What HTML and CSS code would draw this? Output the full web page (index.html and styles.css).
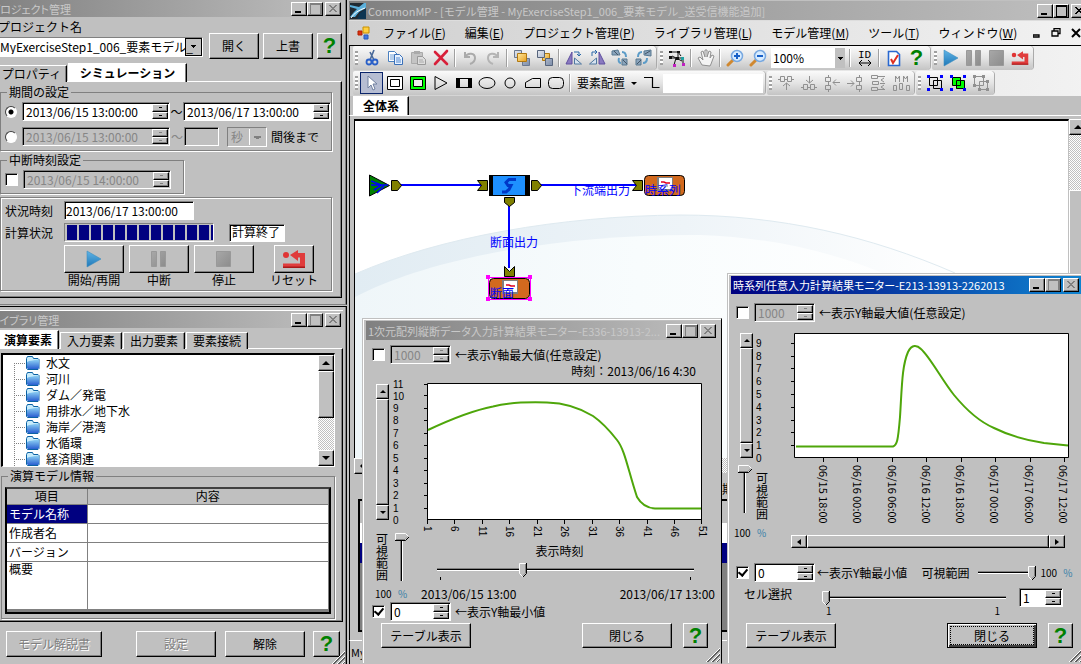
FILE: index.html
```html
<!DOCTYPE html>
<html lang="ja">
<head>
<meta charset="utf-8">
<title>CommonMP</title>
<link rel="stylesheet" href="styles.css">
</head>
<body>
<svg class="defs" aria-hidden="true">
  <defs>
    <linearGradient id="gBlue" x1="0" y1="0" x2="0" y2="1"><stop offset="0" stop-color="#5fb4e6"/><stop offset="1" stop-color="#1f78b8"/></linearGradient>
    <linearGradient id="gFolder" x1="0" y1="0" x2="0" y2="1"><stop offset="0" stop-color="#8fd3f5"/><stop offset="1" stop-color="#2a5fd0"/></linearGradient>
    <linearGradient id="gGray" x1="0" y1="0" x2="1" y2="1"><stop offset="0" stop-color="#a8a8a8"/><stop offset="1" stop-color="#8c8c8c"/></linearGradient>
    <linearGradient id="gGold" x1="0" y1="0" x2="1" y2="1"><stop offset="0" stop-color="#ffe9a0"/><stop offset="1" stop-color="#e8a020"/></linearGradient>
    <linearGradient id="gSteel" x1="0" y1="0" x2="1" y2="1"><stop offset="0" stop-color="#e4e8f0"/><stop offset="1" stop-color="#7c8ca8"/></linearGradient>
    <linearGradient id="gArc" x1="0" y1="0" x2="1" y2="0"><stop offset="0" stop-color="#e1ecf3"/><stop offset="0.55" stop-color="#eef4f8"/><stop offset="1" stop-color="#fff"/></linearGradient>
    <linearGradient id="gArc2" x1="0" y1="0" x2="1" y2="0"><stop offset="0" stop-color="#eff6f9"/><stop offset="0.5" stop-color="#f8fcfd"/><stop offset="1" stop-color="#fff"/></linearGradient>
    <symbol id="close" viewBox="0 0 10 10"><path d="M1 1l7 7M2 1l7 7M8 1l-7 7M9 1l-7 7" stroke="currentColor"/></symbol>
    <symbol id="folder" viewBox="0 0 16 16"><path d="M1.500 3.500l1-2h5l1 2h4.500l1 1v9l-1 1h-10.500l-1-1z" fill="#c8ecfb" stroke="#0b62a4"/><path d="M2 7l2-1 9-1.500 1 1v7l-1 1.500h-10l-1-1z" fill="url(#gFolder)"/></symbol>
    <symbol id="play" viewBox="0 0 18 18"><path d="M2 1v16l14-8z" fill="url(#gBlue)" stroke="#3c8dc0" stroke-width=".6"/></symbol>
    <symbol id="pause" viewBox="0 0 18 18"><path d="M1.500 1.500h5v15h-5zM10.500 1.500h5v15h-5z" fill="url(#gGray)" stroke="#999"/></symbol>
    <symbol id="stop" viewBox="0 0 18 18"><path d="M1.500 1.500h14v15h-14z" fill="url(#gGray)" stroke="#999"/></symbol>
    <symbol id="reset" viewBox="0 0 24 20"><circle cx="4" cy="6" r="3" fill="#e03434"/><path d="M8 6l8-5v3h7v14.500h-22v-4h17v-6h-2v3.500z" fill="#e03c3c"/><path d="M1 17.500h22v1.500h-22z" fill="#a81818"/></symbol>
    <symbol id="grip" viewBox="0 0 14 14"><path d="M0 14L14 0M5 14l9-9M10 14l4-4" stroke="#fff"/><path d="M1 14L14 1M2 14L14 2M6 14l8-8M7 14l7-7M11 14l3-3" stroke="#606060"/></symbol>
    <symbol id="mon" viewBox="0 0 16 14"><path d="M0 0h16v14h-16z" fill="#808080"/><path d="M2 1h13v11h-13z" fill="#fff"/><path d="M4 5h3l2 1h4" stroke="#e00020" stroke-width="1.500" fill="none"/><path d="M5 9h6" stroke="#888"/></symbol>
  </defs>
</svg>
<main class="desktop">

<section class="window main">
  <header class="title">
    <svg class="logo" viewBox="0 0 16 16"><path d="M0 0h16v16h-16z" fill="#202a33"/><path d="M0 2l9 2 5-4h2v5l-7 4-4 5h-5l4-5 3-3-7-2z" fill="#5bb0dc"/><path d="M16 6l-6 4-3 6h9z" fill="#0d3552"/><path d="M1 15c3-5 8-8 14-10" stroke="#fff" fill="none"/></svg>
    <h1>CommonMP - [モデル管理 - MyExerciseStep1_006_要素モデル_送受信機能追加]</h1>
    <div class="caps"><button class="cap min" aria-label="最小化"></button><button class="cap max" aria-label="最大化"></button><button class="cap cls" aria-label="閉じる"><svg><use href="#close"/></svg></button></div>
  </header>
  <nav class="menu">
    <svg class="mdi" viewBox="0 0 14 14"><path d="M1 5h4v4h-4z" fill="#e03010" stroke="#b02000"/><path d="M6 1h6v6h-6z" fill="#ffd040" stroke="#c89000"/><path d="M7 9h4v4h-4z" fill="#4078e0" stroke="#2858b8"/></svg>
    <button>ファイル(<u>F</u>)</button><button>編集(<u>E</u>)</button><button>プロジェクト管理(<u>P</u>)</button><button>ライブラリ管理(<u>L</u>)</button><button>モデル管理(<u>M</u>)</button><button>ツール(<u>T</u>)</button><button>ウィンドウ(<u>W</u>)</button>
    <svg class="mdibtn" viewBox="0 0 48 10"><path d="M0 7h6v2h-6zM19 3h6v5h-6zM19 3h6v1.500M21 3v-2.500h6v5h-2" fill="none" stroke="#000" stroke-width="1.300"/><path d="M39 1l8 8M47 1l-8 8" stroke="#000" stroke-width="2"/></svg>
  </nav>
  <div class="bars">
    <div class="barrow">
      <div class="strip"><i class="grip"></i>
        <button class="tb" aria-label="切り取り"><svg viewBox="0 0 18 18"><path d="M11 1L7 11M7 3l4 8" stroke="#4a6a9a" stroke-width="1.600"/><circle cx="6" cy="13" r="2.500" fill="none" stroke="#2a60c8" stroke-width="1.800"/><circle cx="12" cy="13" r="2.500" fill="none" stroke="#2a60c8" stroke-width="1.800"/></svg></button>
        <button class="tb" aria-label="コピー"><svg viewBox="0 0 18 18"><path d="M2.500 2.500h6l3 3v7h-9z" fill="#fff" stroke="#4a80c0"/><path d="M4 6h4M4 8h4M4 10h4" stroke="#70a0d8"/><path d="M8.500 5.500h5l3 3v7h-8z" fill="#e8f2ff" stroke="#3a70b8"/><path d="M10 9h4M10 11h5M10 13h5" stroke="#5088d0"/></svg></button>
        <button class="tb" aria-label="貼り付け"><svg viewBox="0 0 18 18"><path d="M2.500 3.500h11v11h-11z" fill="#c4c4c4" stroke="#aaa"/><path d="M5 2h6v3h-6z" fill="#aaa"/><path d="M8.500 7.500h5l3 3v5h-8z" fill="#ddd" stroke="#999"/><path d="M10 11h4M10 13h5" stroke="#aaa"/></svg></button>
        <button class="tb" aria-label="削除"><svg viewBox="0 0 18 18"><path d="M3 3l12 12M15 2L3 15" stroke="#d8203a" stroke-width="2.600" stroke-linecap="round"/></svg></button>
        <i class="sep"></i>
        <button class="tb" aria-label="元に戻す"><svg viewBox="0 0 18 18"><path d="M4 3v5h5M4 8c3-5 10-4 10 1 0 3-2 5-5 6" fill="none" stroke="#aaa" stroke-width="2"/></svg></button>
        <button class="tb" aria-label="やり直し"><svg viewBox="0 0 18 18"><path d="M14 3v5h-5M14 8c-3-5-10-4-10 1 0 3 2 5 5 6" fill="none" stroke="#b4b4b4" stroke-width="2"/></svg></button>
        <i class="sep"></i>
        <button class="tb" aria-label="前面へ"><svg viewBox="0 0 18 18"><path d="M1.500 1.500h7v7h-7zM9.500 9.500h7v7h-7z" fill="url(#gSteel)" stroke="#6a7890"/><path d="M4.500 4.500h9v8h-9z" fill="url(#gGold)" stroke="#b07810"/></svg></button>
        <button class="tb" aria-label="背面へ"><svg viewBox="0 0 18 18"><path d="M6.500 4.500h7v7h-7z" fill="url(#gGold)" stroke="#b07810"/><path d="M1.500 1.500h7v7h-7zM9.500 9.500h7v7h-7z" fill="url(#gSteel)" stroke="#56647c"/></svg></button>
        <i class="sep"></i>
        <button class="tb" aria-label="左回転"><svg viewBox="0 0 18 18"><path d="M7 3v12h-6z" fill="#8a7ac0" stroke="#6050a0"/><path d="M9.500 9v6h7z" fill="#d8e4f0" stroke="#5078a0"/><path d="M9 3h5v4M12 5l2 2 2-2" stroke="#2a68a8" fill="none"/></svg></button>
        <button class="tb" aria-label="右回転"><svg viewBox="0 0 18 18"><path d="M11 3v12h6z" fill="#8a7ac0" stroke="#6050a0"/><path d="M8.500 9v6h-7z" fill="#d8e4f0" stroke="#5078a0"/><path d="M4 7V3h5M7 1l2 2-2 2" stroke="#2a68a8" fill="none"/></svg></button>
        <button class="tb" aria-label="下へ"><svg viewBox="0 0 18 18"><path d="M1 2l6-1 2 5-8 0zM11 10h5v6h-5z" fill="#8aa4bc" stroke="#587890"/><path d="M3 2l4 4M12 11l4 4" stroke="#456"/><path d="M11 3c3 0 4 2 4 5M8 9c-1 3 0 5 2 5" stroke="#5c9cc8" stroke-width="2" fill="none"/></svg></button>
        <button class="tb" aria-label="上へ"><svg viewBox="0 0 18 18"><path d="M10 2l7-1 0 6-7-1zM2 10h5v6h-5z" fill="#8aa4bc" stroke="#587890"/><path d="M11 5l5-3M3 15l4-4" stroke="#456"/><path d="M8 3c-3 0-4 2-4 5M13 9c0 3-1 5-4 5" stroke="#5c9cc8" stroke-width="2" fill="none"/></svg></button>
      </div>
      <div class="strip"><i class="grip"></i>
        <button class="tb" aria-label="接続"><svg viewBox="0 0 18 18"><path d="M4 3h6l3 4M3 9h12M10 4v5M15 8v7M8 9l-2 7M4 7l10 5" stroke="#111" fill="none"/><path d="M1 7h3v3h-3zM8 8h3v3h-3zM1 2h3v2h-3zM9 2h3v2h-3z" fill="#111"/><path d="M13 8h3v3h-3z" fill="#20a0a0"/><path d="M5 15h3v3h-3zM14 14h3v3h-3z" fill="#c020c0"/></svg></button>
        <i class="sep"></i>
        <button class="tb" aria-label="手のひら"><svg viewBox="0 0 18 18"><path d="M5 16L1 9l2-1 3 3-2-8 2-1 2 6V1h2v7l2-6 2 1-1 6 2-3 2 1-3 8-1 2z" fill="#f4f4f4" stroke="#909090"/></svg></button>
        <i class="sep"></i>
        <button class="tb" aria-label="拡大"><svg viewBox="0 0 18 18"><path d="M7 11l-5 5" stroke="#d08830" stroke-width="3" stroke-linecap="round"/><circle cx="11" cy="7" r="5.500" fill="#d8ecff" stroke="#78a8e0" stroke-width="1.500"/><path d="M8 7h6M11 4v6" stroke="#1860c8" stroke-width="2"/></svg></button>
        <button class="tb" aria-label="縮小"><svg viewBox="0 0 18 18"><path d="M7 11l-5 5" stroke="#d08830" stroke-width="3" stroke-linecap="round"/><circle cx="11" cy="7" r="5.500" fill="#d8ecff" stroke="#78a8e0" stroke-width="1.500"/><path d="M8 7h6" stroke="#1860c8" stroke-width="2"/></svg></button>
        <select class="zoom" aria-label="倍率"><option>100%</option></select>
        <i class="sep"></i>
        <button class="tb idb" aria-label="ID幅">ID<svg viewBox="0 0 14 6"><path d="M1 3h12M4 0L1 3l3 3M10 0l3 3-3 3" stroke="#000" fill="none"/></svg></button>
        <i class="sep"></i>
        <button class="tb" aria-label="チェック"><svg viewBox="0 0 18 18"><path d="M3.500 2.500h8l3 3v11h-11z" fill="#fff" stroke="#2868d0" stroke-width="1.600"/><path d="M6 10l2 4 5-8" stroke="#e03020" stroke-width="2" fill="none"/></svg></button>
        <button class="tb q" aria-label="ヘルプ">?</button>
      </div>
      <div class="strip"><i class="grip"></i>
        <button class="tb" aria-label="開始"><svg><use href="#play"/></svg></button>
        <button class="tb" aria-label="中断"><svg><use href="#pause"/></svg></button>
        <button class="tb" aria-label="停止"><svg><use href="#stop"/></svg></button>
        <button class="tb" aria-label="リセット"><svg><use href="#reset"/></svg></button>
      </div>
    </div>
    <div class="barrow">
      <div class="strip"><i class="grip"></i>
        <button class="tb sel" aria-label="選択"><svg viewBox="0 0 18 18"><path d="M5 2v12l3-3 2 5 2-1-2-5h4z" fill="#fff" stroke="#7080a0"/></svg></button>
        <button class="tb" aria-label="二重枠"><svg viewBox="0 0 18 18"><path d="M1.500 2.500h15v13h-15zM4.500 5.500h9v7h-9z" fill="#fff" stroke="#000"/></svg></button>
        <button class="tb" aria-label="緑枠"><svg viewBox="0 0 18 18"><path d="M1.500 2.500h15v13h-15z" fill="#0f0" stroke="#000"/><path d="M4.500 5.500h9v7h-9z" fill="#eee" stroke="#000"/></svg></button>
        <button class="tb" aria-label="三角"><svg viewBox="0 0 18 18"><path d="M3 2.500v13l12-6.500z" fill="none" stroke="#000"/></svg></button>
        <button class="tb" aria-label="太枠"><svg viewBox="0 0 18 18"><path d="M1 4h16v10h-16zM5 5v8h8v-8z" fill-rule="evenodd"/></svg></button>
        <button class="tb" aria-label="楕円"><svg viewBox="0 0 18 18"><ellipse cx="9" cy="9" rx="8" ry="5.500" fill="none" stroke="#000"/></svg></button>
        <button class="tb" aria-label="円"><svg viewBox="0 0 18 18"><circle cx="9" cy="9" r="5" fill="none" stroke="#000"/></svg></button>
        <button class="tb" aria-label="台形"><svg viewBox="0 0 18 18"><path d="M1.500 13.500v-5l7-4h8v9z" fill="none" stroke="#000"/></svg></button>
        <button class="tb" aria-label="角丸"><svg viewBox="0 0 18 18"><rect x="1.500" y="3.500" width="15" height="11" rx="4" fill="none" stroke="#000"/></svg></button>
        <i class="sep"></i>
        <button class="place">要素配置<i class="down"></i></button>
        <button class="tb" aria-label="線"><svg viewBox="0 0 18 18"><path d="M1 3.500h8.500v10h7" fill="none" stroke="#000" stroke-width="1.200"/></svg></button>
        <input class="blank" type="text" aria-label="線種">
      </div>
      <div class="strip"><i class="grip"></i>
        <button class="tb dim" aria-label="整列1"><svg viewBox="0 0 18 18"><path d="M3.500 2.500h4v5h-4zM10.500 2.500h4v5h-4zM7 5.500h4M1 5.500h2M15 5.500h2M9.500 16V9M6 12l3.500-3 3.500 3"/></svg></button>
        <button class="tb dim" aria-label="整列2"><svg viewBox="0 0 18 18"><path d="M3.500 10.500h4v5h-4zM10.500 10.500h4v5h-4zM7 13.500h4M1 13.500h2M15 13.500h2M9.500 2v7M6 6l3.500 3 3.500-3"/></svg></button>
        <button class="tb dim" aria-label="整列3"><svg viewBox="0 0 18 18"><path d="M2.500 3.500h5v4h-5zM2.500 11.500h5v4h-5zM5.500 1v2M5.500 8v3M5.500 16v2M17 8.500H10M13 5.500l-3 3 3 3"/></svg></button>
        <button class="tb dim" aria-label="整列4"><svg viewBox="0 0 18 18"><path d="M10.500 3.500h5v4h-5zM10.500 11.500h5v4h-5zM13.500 1v2M13.500 8v3M13.500 16v2M1 9.500h7M5 6.500l3 3-3 3"/></svg></button>
        <button class="tb dim" aria-label="整列5"><svg viewBox="0 0 18 18"><path d="M2.500 1.500h6v3h-6zM3.500 7.500h6v3h-6zM2.500 13.500h6v3h-6zM9 2.500h7M11 9.500h5M9 15.500h7M15 4l-3 2 3 2M15 11l-3 2 3 2"/></svg></button>
        <button class="tb dim" aria-label="整列6"><svg viewBox="0 0 18 18"><path d="M1.500 11.500h3v5h-3zM7.500 9.500h3v6h-3zM14.500 11.500h3v5h-3zM3.500 8V2l2 3 2-3v6M11.500 8V2l2 3 2-3v6"/></svg></button>
      </div>
      <div class="strip"><i class="grip"></i>
        <button class="tb" aria-label="グループ化"><svg viewBox="0 0 18 18"><path d="M3.500 3.500h8v8h-8zM7.500 6.500h8v8h-8z" fill="none" stroke="#000"/><path d="M1 1h3v3h-3zM14 1h3v3h-3zM1 14h3v3h-3zM14 14h3v3h-3z" fill="#00f"/></svg></button>
        <button class="tb" aria-label="グループ編集"><svg viewBox="0 0 18 18"><path d="M3 3h9v4h4v8h-9v-4h-4z" fill="#0f0"/><path d="M3.500 3.500h8v8h-8zM7.500 6.500h8v8h-8z" fill="none" stroke="#000"/><path d="M1 1h3v3h-3zM14 1h3v3h-3zM1 14h3v3h-3zM14 14h3v3h-3z" fill="#00f"/></svg></button>
        <button class="tb dim" aria-label="グループ解除"><svg viewBox="0 0 18 18"><path d="M2.500 2.500h9v9h-9zM7.500 7.500h8v8h-8z"/><path d="M1 1h3v3h-3zM10 1h3v3h-3zM1 10h3v3h-3zM14 6h3v3h-3zM14 14h3v3h-3zM6 14h3v3h-3z" fill="#909090" stroke="none"/></svg></button>
      </div>
    </div>
  </div>
  <div class="tabs mtabs"><button class="tab on">全体系</button></div>
  <div class="work">
    <div class="canvas">
      <svg class="model" width="712" height="337" viewBox="355 121 712 337" preserveAspectRatio="xMinYMin">
        <path d="M355 274C440 237 560 216 680 215C780 215 870 236 955 273V458H355z" fill="url(#gArc)"/>
        <path d="M355 297C430 258 560 234 700 235C790 238 860 260 920 290V458H355z" fill="url(#gArc2)"/>
        <path d="M355 274C440 237 560 216 680 215C780 215 870 236 955 273" fill="none" stroke="#dfeaf0"/>
        <g stroke="#00f" stroke-width="2"><path d="M400 185H482M540 185H636M509 206V268"/></g>
        <path d="M369.500 175v21l20-10.500z" fill="#008000" stroke="#000"/><path d="M371 181l10 4h7M374 190l8-5M371 185h12M377 193l7-7" stroke="#00f" stroke-width="1.500" fill="none"/>
        <g fill="#808000" stroke="#000"><path d="M391.500 180.500h6l4 5-4 5h-6z"/><path d="M477.500 180.500h10v10h-10l4-5z"/><path d="M531.500 180.500h6l4 5-4 5h-6z"/><path d="M632.500 180.500h10v10h-10l4-5z"/><path d="M504.500 197.500h10v5l-5 4-5-4z"/><path d="M504.500 266.500l5 5 5-5v10h-10z"/></g>
        <path d="M489 175h41v21h-41z"/><path d="M493 176h32v19h-32z" fill="#1e90ff"/><path d="M516 179.500h-7l-3 3 2 3h3l-2 4-3 2.500h-4" stroke="#0038c8" stroke-width="3" fill="none"/>
        <rect x="644.500" y="175.500" width="40" height="20" rx="4" fill="#d2691e" stroke="#000"/><use href="#mon" x="657" y="177" width="16" height="14"/>
        <rect x="489.500" y="278.500" width="40" height="20" rx="4" fill="#d2691e" stroke="#000"/><use href="#mon" x="502" y="280" width="16" height="14"/>
        <path d="M488.500 277.500h42v22h-42z" fill="none" stroke="#f0f"/><path d="M486 275h4v4h-4zM528 275h4v4h-4zM486 297h4v4h-4zM528 297h4v4h-4z" fill="#f0f"/>
        <g class="nodetext"><text x="570" y="195">下流端出力</text><text x="645" y="195">時系列</text><text x="490" y="247">断面出力</text><text x="490" y="298">断面</text></g>
      </svg>
      <div class="scroll v"><button class="up" aria-label="上"></button><i class="track"></i><i class="thumb"></i></div>
    </div>
    <div class="scroll h"><button class="left" aria-label="左"></button><i class="track"></i></div>
    <div class="lower"><span>期間</span><div class="grid"><i class="hd"></i><i class="w"></i><i class="n"></i></div></div>
  </div>
  <footer class="status">MyExerciseStep1_006</footer>
</section>

<section class="window project">
  <header class="title"><h2>プロジェクト管理</h2><div class="caps"><button class="cap min" aria-label="最小化"></button><button class="cap max off" aria-label="最大化"></button><button class="cap cls off" aria-label="閉じる"><svg><use href="#close"/></svg></button></div></header>
  <div class="top">
    <div class="name"><label for="pj">プロジェクト名</label><select id="pj"><option>MyExerciseStep1_006_要素モデル_</option></select></div>
    <button class="btn b50">開く</button><button class="btn b50">上書</button><button class="btn q" aria-label="ヘルプ">?</button>
  </div>
  <div class="tabs"><button class="tab first">プロパティ</button><button class="tab on wide">シミュレーション</button></div>
  <div class="page">
    <fieldset><legend>期間の設定</legend>
      <div class="row"><input type="radio" name="p" checked aria-label="期間指定"><div class="spin dt"><input type="text" value="2013/06/15 13:00:00" aria-label="開始"><span><button></button><button></button></span></div><span class="til">～</span><div class="spin dt"><input type="text" value="2013/06/17 13:00:00" aria-label="終了"><span><button></button><button></button></span></div></div>
      <div class="row"><input type="radio" name="p" aria-label="間隔指定"><div class="spin dt off"><input type="text" value="2013/06/15 13:00:00" disabled aria-label="開始2"><span><button></button><button></button></span></div><span class="til dis">～</span><input class="sunk off amount" type="text" disabled aria-label="量"><select class="unit" disabled aria-label="単位"><option>秒</option></select><span>間後まで</span></div>
    </fieldset>
    <fieldset class="brk"><legend>中断時刻設定</legend>
      <div class="row"><input type="checkbox" aria-label="中断時刻"><div class="spin dt off"><input type="text" value="2013/06/15 14:00:00" disabled aria-label="中断"><span><button></button><button></button></span></div></div>
    </fieldset>
    <div class="box">
      <div class="row"><label for="st">状況時刻</label><input id="st" class="sunk sttime" type="text" value="2013/06/17 13:00:00"></div>
      <div class="row"><span class="lab">計算状況</span><div class="prog" role="progressbar" aria-label="計算状況"></div><output class="sunk">計算終了</output></div>
      <div class="acts">
        <div><button class="btn" id="a1"><svg><use href="#play"/></svg></button><label for="a1">開始/再開</label></div>
        <div><button class="btn" id="a2"><svg><use href="#pause"/></svg></button><label for="a2">中断</label></div>
        <div><button class="btn" id="a3"><svg><use href="#stop"/></svg></button><label for="a3">停止</label></div>
        <div class="rs"><button class="btn" id="a4"><svg class="big"><use href="#reset"/></svg></button><label for="a4">リセット</label></div>
      </div>
    </div>
  </div>
</section>

<section class="window library">
  <header class="title"><h2>ライブラリ管理</h2><div class="caps"><button class="cap min" aria-label="最小化"></button><button class="cap max off" aria-label="最大化"></button><button class="cap cls off" aria-label="閉じる"><svg><use href="#close"/></svg></button></div></header>
  <div class="tabs"><button class="tab on">演算要素</button><button class="tab">入力要素</button><button class="tab">出力要素</button><button class="tab">要素接続</button></div>
  <div class="page">
    <div class="tree">
      <ul><li><svg><use href="#folder"/></svg>水文</li><li><svg><use href="#folder"/></svg>河川</li><li><svg><use href="#folder"/></svg>ダム／発電</li><li><svg><use href="#folder"/></svg>用排水／地下水</li><li><svg><use href="#folder"/></svg>海岸／港湾</li><li><svg><use href="#folder"/></svg>水循環</li><li><svg><use href="#folder"/></svg>経済関連</li></ul>
      <div class="scroll v"><button class="up" aria-label="上"></button><i class="thumb"></i><i class="track"></i><button class="dn" aria-label="下"></button></div>
    </div>
    <fieldset><legend>演算モデル情報</legend>
      <div class="tbl"><table><thead><tr><th>項目</th><th>内容</th></tr></thead><tbody><tr><td class="cur">モデル名称</td><td></td></tr><tr><td>作成者名</td><td></td></tr><tr><td>バージョン</td><td></td></tr><tr class="tall"><td>概要</td><td></td></tr></tbody></table></div>
    </fieldset>
  </div>
  <div class="foot"><button class="btn" disabled>モデル解説書</button><button class="btn set" disabled>設定</button><button class="btn rel">解除</button><button class="btn q" aria-label="ヘルプ">?</button></div>
  <svg class="rgrip"><use href="#grip"/></svg>
</section>

<section class="window mon1">
  <header class="title"><h2>1次元配列縦断データ入力計算結果モニター-E336-13913-2...</h2><div class="caps"><button class="cap min" aria-label="最小化"></button><button class="cap max off" aria-label="最大化"></button><button class="cap cls off" aria-label="閉じる"><svg><use href="#close"/></svg></button></div></header>
  <div class="row yset"><input type="checkbox" id="m1x"><div class="spin num off"><input type="text" value="1000" disabled aria-label="最大値"><span><button></button><button></button></span></div><label for="m1x">←表示Y軸最大値(任意設定)</label></div>
  <div class="now">時刻：2013/06/16 4:30</div>
  <div class="chartrow">
    <div class="scroll v"><button class="up" aria-label="上"></button><i class="thumb"></i><button class="dn" aria-label="下"></button></div>
    <svg class="chart" width="322" height="152" viewBox="390 380 322 152">
      <path d="M427.500 383.500h274v136h-274z" fill="#fff" stroke="#000"/>
      <path d="M424 384.500h4M424 395.500h4M424 408.500h4M424 420.500h4M424 433.500h4M424 445.500h4M424 458.500h4M424 470.500h4M424 483.500h4M424 495.500h4M424 508.500h4M427.500 519v5M454.500 519v5M482.500 519v5M509.500 519v5M537.500 519v5M564.500 519v5M592.500 519v5M619.500 519v5M647.500 519v5M674.500 519v5M701.500 519v5" stroke="#000"/>
      <path d="M428 430C445 422 470 411 493 406.500C510 402 530 402 547 402.500C565 403 580 408 593 416C603 423 610 431 617 440C625 450 628 470 637 497C641 504 646 508 655 508.500H701" fill="none" stroke="#4ea60a" stroke-width="2"/>
      <g><text x="393" y="388">11</text><text x="393" y="400">10</text><text x="393" y="412">9</text><text x="393" y="424">8</text><text x="393" y="437">7</text><text x="393" y="449">6</text><text x="393" y="462">5</text><text x="393" y="474">4</text><text x="393" y="487">3</text><text x="393" y="499">2</text><text x="393" y="512">1</text><text x="393" y="524">0</text></g>
      <g><text transform="translate(424 526) rotate(90)">1</text><text transform="translate(451 526) rotate(90)">6</text><text transform="translate(479 526) rotate(90)">11</text><text transform="translate(506 526) rotate(90)">16</text><text transform="translate(534 526) rotate(90)">21</text><text transform="translate(561 526) rotate(90)">26</text><text transform="translate(589 526) rotate(90)">31</text><text transform="translate(616 526) rotate(90)">36</text><text transform="translate(644 526) rotate(90)">41</text><text transform="translate(671 526) rotate(90)">46</text><text transform="translate(699 526) rotate(90)">51</text></g>
    </svg>
  </div>
  <div class="timerow"><span class="vt">可視範囲</span><input class="vs" type="range" min="0" max="100" value="0" aria-label="可視範囲"><div class="time"><label for="ts">表示時刻</label><input id="ts" type="range" min="0" max="100" value="33"><div class="ticks"><i></i><i></i></div></div></div>
  <div class="dates"><span class="pct">100 <b>%</b></span><span>2013/06/15 13:00</span><span class="end">2013/06/17 13:00</span></div>
  <div class="row ymin"><input type="checkbox" id="m1n" checked><div class="spin num"><input type="text" value="0" aria-label="最小値"><span><button></button><button></button></span></div><label for="m1n">←表示Y軸最小値</label></div>
  <div class="btns"><button class="btn">テーブル表示</button><button class="btn shut">閉じる</button><button class="btn q" aria-label="ヘルプ">?</button></div>
  <svg class="rgrip"><use href="#grip"/></svg>
</section>

<section class="window mon2">
  <header class="title active"><h2>時系列任意入力計算結果モニター-E213-13913-2262013</h2><div class="caps"><button class="cap min" aria-label="最小化"></button><button class="cap max off" aria-label="最大化"></button><button class="cap cls off" aria-label="閉じる"><svg><use href="#close"/></svg></button></div></header>
  <div class="row yset"><input type="checkbox" id="m2x"><div class="spin num off"><input type="text" value="1000" disabled aria-label="最大値"><span><button></button><button></button></span></div><label for="m2x">←表示Y軸最大値(任意設定)</label></div>
  <div class="chartrow">
    <div class="scroll v"><button class="up" aria-label="上"></button><i class="thumb"></i><button class="dn" aria-label="下"></button></div>
    <svg class="chart" width="318" height="134" viewBox="755 328 318 134">
      <path d="M794.500 333.500h274v124h-274z" fill="#fff" stroke="#000"/>
      <path d="M791 343.500h4M791 356.500h4M791 368.500h4M791 381.500h4M791 394.500h4M791 407.500h4M791 420.500h4M791 432.500h4M791 445.500h4M823.500 458v4M857.500 458v4M892.500 458v4M926.500 458v4M961.500 458v4M995.500 458v4M1030.500 458v4M1064.500 458v4" stroke="#000"/>
      <path d="M796 446.500H893C897 445 898 441 900 417C902 385 902 366 908 352C912 344 917 345 921 349C930 357 942 380 954 395C968 412 980 422 994 428C1010 436 1025 440 1044 443L1068 445.500" fill="none" stroke="#4ea60a" stroke-width="2"/>
      <g><text x="756" y="347">9</text><text x="756" y="360">8</text><text x="756" y="372">7</text><text x="756" y="385">6</text><text x="756" y="398">5</text><text x="756" y="411">4</text><text x="756" y="424">3</text><text x="756" y="436">2</text><text x="756" y="449">1</text><text x="756" y="462">0</text></g>
    </svg>
  </div>
  <div class="axisrow"><input class="vs" type="range" min="0" max="100" value="0" aria-label="可視範囲"><span class="vt">可視範囲</span><div class="xl"><span>06/15 18:00</span><span>06/16 00:00</span><span>06/16 06:00</span><span>06/16 12:00</span><span>06/16 18:00</span><span>06/17 00:00</span><span>06/17 06:00</span><span>06/17 12:00</span></div></div>
  <div class="hrow"><span class="pct">100 <b>%</b></span><div class="scroll h"><button class="left" aria-label="左"></button><i class="thumb"></i><button class="right" aria-label="右"></button></div></div>
  <div class="row ymin"><input type="checkbox" id="m2n" checked><div class="spin num"><input type="text" value="0" aria-label="最小値"><span><button></button><button></button></span></div><label for="m2n">←表示Y軸最小値</label><label class="vis" for="vr">可視範囲</label><input id="vr" type="range" min="0" max="100" value="100"><span class="pct">100 <b>%</b></span></div>
  <div class="cell"><label for="cs">セル選択</label><div class="cs"><input id="cs" type="range" min="0" max="100" value="0"><div class="nums"><span>1</span><span>1</span></div></div><div class="spin one"><input type="text" value="1" aria-label="セル"><span><button></button><button></button></span></div></div>
  <div class="btns"><button class="btn">テーブル表示</button><button class="btn shut def">閉じる</button><button class="btn q" aria-label="ヘルプ">?</button></div>
  <svg class="rgrip"><use href="#grip"/></svg>
</section>
</main>
</body>
</html>
```

FILE: styles.css
```css
* { box-sizing: border-box; }
html, body { height: 100%; }
body {
  margin: 0;
  overflow: hidden;
  background: #c0c0c0;
  color: #000;
  font: 12px/14px "Noto Sans CJK JP", "Liberation Sans", sans-serif;
}
button, input, select, output { font: inherit; color: inherit; margin: 0; padding: 0; border-radius: 0; }
h1, h2, ul { margin: 0; padding: 0; font: inherit; list-style: none; }
i, b { font-style: normal; font-weight: normal; }
.defs { position: absolute; width: 0; height: 0; }
.desktop { position: relative; height: 100vh; overflow: hidden; }

/* windows */
.window { position: absolute; background: #c0c0c0; display: flex; flex-direction: column; }
.title {
  display: flex;
  align-items: center;
  flex: none;
  height: 19px;
  padding: 0 2px;
  background: linear-gradient(90deg, #808080, #c0c0c0);
  color: #c8c8c8;
  white-space: nowrap;
}
.title.active { background: linear-gradient(90deg, #000080, #1084d0); color: #fff; }
.title h1, .title h2 { flex: 1; min-width: 0; overflow: hidden; font-size: 11px; line-height: 16px; }
.title h2 { font-feature-settings: "palt"; }
.caps { display: flex; flex: none; }
.cap, .btn, .scroll button, .thumb, .spin button {
  background: #c0c0c0;
  border: 1px solid;
  border-color: #fff #000 #000 #fff;
  box-shadow: inset -1px -1px 0 #808080;
}
.cap { width: 16px; height: 14px; display: flex; align-items: center; justify-content: center; color: #000; }
.cap.cls { margin-left: 2px; }
.cap.off { color: #808080; }
.cap svg { width: 10px; height: 10px; flex: none; }
.min::before { content: ""; width: 6px; height: 2px; background: #000; margin: 6px 3px 0 0; }
.max::before { content: ""; width: 9px; height: 9px; border: 1px solid; border-top-width: 2px; }
.rgrip { position: absolute; right: 1px; bottom: 1px; width: 14px; height: 14px; }

/* controls */
.btn { height: 25px; width: 90px; display: flex; align-items: center; justify-content: center; white-space: nowrap; }
.btn:disabled { color: #808080; text-shadow: 1px 1px 0 #fff; }
.btn.q { width: 25px; }
.q { color: #008000; font: bold 22px/22px "Liberation Sans", sans-serif; }
.btn.def { border-color: #000; box-shadow: inset 1px 1px 0 #fff, inset -2px -2px 0 #404040; outline: 1px dotted #000; outline-offset: -4px; }
.btn svg { width: 18px; height: 18px; }
.btn svg.big { width: 26px; height: 20px; }
.row { display: flex; align-items: center; height: 19px; white-space: nowrap; }
.sunk, .spin, .prog {
  border: 1px solid;
  border-color: #808080 #fff #fff #808080;
  box-shadow: inset 1px 1px 0 #000;
  background: #fff;
  height: 19px;
}
.spin { display: flex; flex: none; padding: 1px; }
.spin input { flex: 1; min-width: 0; border: 0; background: none; padding-left: 2px; height: 15px; outline: 0; }
.spin > span { display: flex; flex-direction: column; width: 16px; }
.spin button { flex: 1; min-height: 0; background: #c0c0c0 linear-gradient(#000, #000) center / 3px 1px no-repeat; }
.off { background: #c0c0c0; }
.spin.off, .spin.off input, .til.dis { color: #868686; }
.off button { background: #c0c0c0 linear-gradient(#808080, #808080) center / 3px 1px no-repeat; }
.spin.dt { width: 148px; }
.spin.num { width: 61px; }
.spin.one { width: 44px; }
.til { width: 14px; text-align: center; }
input[type="radio"], input[type="checkbox"] { appearance: none; flex: none; width: 12px; height: 12px; background: #fff; border: 1px solid; border-color: #808080 #fff #fff #808080; }
input[type="radio"] { border-radius: 50%; border-color: #404040 #fff #fff #404040; }
input[type="radio"]:checked { background: radial-gradient(#000 2px, #fff 3px); }
input[type="checkbox"] { width: 13px; height: 13px; box-shadow: inset 1px 1px 0 #000; }
input[type="checkbox"]:checked { display: grid; place-items: center; }
input[type="checkbox"]:checked::before { content: ""; width: 4px; height: 7px; border: solid #000; border-width: 0 2px 2px 0; transform: rotate(40deg); margin-bottom: 2px; }
select { appearance: none; white-space: nowrap; }
fieldset { margin: 0; min-width: 0; padding: 3px 0 4px; border: 1px solid #808080; }
legend { margin-left: 6px; padding: 0 2px; line-height: 14px; }

/* tabs */
.tabs { display: flex; align-items: flex-end; flex: none; position: relative; }
.tab { height: 17px; background: #c0c0c0; border: 1px solid; border-color: #fff #000 transparent #fff; border-bottom: 0; white-space: nowrap; margin-right: 1px; width: 62px; box-shadow: inset -1px 0 0 #808080; }
.tab.on { height: 19px; background: #fff; font-weight: bold; }
.page { border: 1px solid; border-color: #fff #000 #000 #fff; box-shadow: inset -1px -1px 0 #808080; flex: none; }

/* scrollbars */
.scroll { display: flex; flex: none; }
.scroll.v { flex-direction: column; width: 16px; }
.scroll button { flex: none; width: 16px; height: 16px; display: flex; align-items: center; justify-content: center; }
.scroll button::before { content: ""; border: 4px solid transparent; }
.scroll .up::before { border-bottom-color: #000; border-top: 0; }
.scroll .dn::before { border-top-color: #000; border-bottom: 0; }
.scroll .left::before { border-right-color: #000; border-left: 0; }
.scroll .right::before { border-left-color: #000; border-right: 0; }
.track { flex: 1; background: repeating-conic-gradient(#fff 0 25%, #c0c0c0 0 50%) 0 0 / 2px 2px; }

/* sliders */
input[type="range"] { appearance: none; background: none; height: 14px; display: block; }
input[type="range"]::-webkit-slider-runnable-track { height: 3px; background: #000; border: solid; border-width: 1px 0; border-color: #808080 transparent #fff; }
input[type="range"]::-webkit-slider-thumb { appearance: none; width: 8px; height: 14px; margin-top: -6px; background: url("data:image/svg+xml,%3Csvg xmlns='http://www.w3.org/2000/svg' viewBox='0 0 8 14'%3E%3Cpath d='M.5.500h6v10l-3 3-3-3z' fill='%23c0c0c0' stroke='%23fff'/%3E%3Cpath d='M7.500 0v10.500l-3.500 3.500' fill='none' stroke='%23000'/%3E%3Cpath d='M6.500 1v9l-3 3' fill='none' stroke='%23808080'/%3E%3C/svg%3E") 0 0 / 8px 14px no-repeat; }
input.vs { writing-mode: vertical-lr; width: 14px; height: 48px; margin: 0; }
input.vs::-webkit-slider-runnable-track { width: 3px; height: auto; border-width: 0 1px; border-color: transparent #fff transparent #808080; }
input.vs::-webkit-slider-thumb { width: 14px; height: 8px; margin: 0 0 0 -6px; background: url("data:image/svg+xml,%3Csvg xmlns='http://www.w3.org/2000/svg' viewBox='0 0 14 8'%3E%3Cpath d='M.5.500h10l3 3-3 3h-10z' fill='%23c0c0c0' stroke='%23fff'/%3E%3Cpath d='M0 7.500h10.500l3.500-3.500' fill='none' stroke='%23000'/%3E%3Cpath d='M1 6.500h9l3-3' fill='none' stroke='%23808080'/%3E%3C/svg%3E") 0 0 / 14px 8px no-repeat; }
.vt { width: 12px; line-height: 12px; white-space: normal; flex: none; }
.pct { font-size: 10px; white-space: nowrap; }
.pct b { color: #3a80a8; margin-left: 4px; }

/* main window */
.main { left: 347px; top: 0; right: -6px; bottom: 0; border-left: 2px solid #c0c0c0; padding-top: 1px; }
.main .title { padding: 0 0 0 1px; }
.logo { width: 16px; height: 16px; margin-right: 2px; }
.menu { display: flex; align-items: center; flex: none; height: 25px; background: linear-gradient(90deg, #d0d0d0, #f2f2f2); padding-left: 8px; border-top: 1px solid #ddd; }
.mdi { width: 14px; height: 14px; margin-right: 12px; flex: none; }
.menu button { border: 0; background: none; white-space: nowrap; margin-right: 19px; }
.menu button:last-of-type { margin-right: 8px; }
.mdibtn { width: 48px; height: 10px; margin-left: auto; margin-right: 6px; flex: none; }
.bars { flex: none; border-top: 1px solid #000; border-left: 1px solid #000; padding-left: 3px; background: linear-gradient(90deg, #d0d0d0, #f2f2f2); }
.barrow { display: flex; height: 25px; gap: 2px; }
.strip { display: flex; align-items: center; flex: none; padding-right: 2px; background: linear-gradient(#fafafa, #e4e4e4 50%, #c4c4c4); border-radius: 2px 4px 4px 2px; box-shadow: 1px 0 0 #aaa; height: 24px; }
.grip { width: 3px; height: 14px; margin: 0 2px; background: repeating-linear-gradient(#a0a0a0 0 2px, #fff 2px 4px); flex: none; }
.tb { width: 23px; height: 22px; border: 1px solid transparent; background: none; display: flex; align-items: center; justify-content: center; flex: none; }
.tb svg { width: 18px; height: 18px; flex: none; }
.tb.sel { background: #b6bdd2; border-color: #0a246a; }
.tb.dim svg { fill: none; stroke: #909090; }
.tb.idb { flex-direction: column; font: 11px/9px "Liberation Mono", monospace; }
.tb.idb svg { width: 14px; height: 6px; }
.sep { width: 1px; height: 18px; background: #a0a0a0; box-shadow: 1px 0 0 #fff; margin: 0 3px 0 2px; flex: none; }
.zoom { width: 74px; height: 20px; margin: 0 2px; border: 0; padding-left: 2px; background: linear-gradient(#000, #000) 69px 11px / 1px 1px no-repeat, linear-gradient(#000, #000) 68px 10px / 3px 1px no-repeat, linear-gradient(#000, #000) 67px 9px / 5px 1px no-repeat, linear-gradient(#c0c0c0, #c0c0c0) 64px 0 / 10px 20px no-repeat, #fff; }
.place { display: flex; align-items: center; gap: 6px; width: 67px; padding: 0 0 0 4px; border: 0; background: none; white-space: nowrap; }
.down { border: 3px solid transparent; border-top-color: #000; border-bottom: 0; }
.blank { width: 100px; height: 19px; border: 0; background: #fff; }
.mtabs { height: 20px; padding-left: 3px; border-bottom: 1px solid #fff; border-left: 1px solid #000; }
.mtabs .tab { width: 56px; }
.work { flex: 1; min-height: 0; display: flex; flex-direction: column; padding: 3px 0 0 4px; border-left: 1px solid #000; }
.canvas { display: flex; height: 339px; flex: none; }
.model { flex: 1; min-width: 0; height: 339px; border: 1px solid; border-width: 2px 1px 0; border-color: #000 #c0c0c0 #c0c0c0 #000; background: #fff; }
.nodetext text { fill: #00f; font-size: 12px; }
.canvas .scroll { width: 18px; }
.canvas .scroll button { width: 18px; }
.canvas .track { flex: none; height: 55px; }
.canvas .thumb { flex: 1; }
.work > .scroll { height: 15px; }
.lower { flex: 1; min-height: 0; display: flex; flex-direction: column; padding: 9px 8px 8px 4px; }
.lower span { padding-left: 364px; height: 17px; }
.grid { flex: 1; background: #808080; border: 2px solid #000; }
.grid i { display: block; }
.hd { height: 22px; background: #c0c0c0; }
.w { height: 20px; background: #fff; }
.n { height: 20px; background: #000080; }
.status { flex: none; height: 24px; border-top: 1px solid #fff; padding: 4px 1px; border-left: 1px solid #000; font-size: 11px; }

/* project window */
.project, .library { left: -12px; width: 359px; border-right: 1px solid #000; box-shadow: inset -1px 0 0 #808080; padding-right: 3px; }
.project { top: 0; height: 305px; border-bottom: 1px solid #808080; }
.project .title { height: 17px; }
.top { display: flex; gap: 4px; align-items: flex-end; height: 42px; padding: 0; flex: none; }
.name { width: 217px; padding: 0 2px 2px 10px; display: flex; flex-direction: column; }
.name label { height: 17px; }
#pj, .unit { height: 20px; border: 1px solid; border-color: #808080 #fff #fff #808080; }
#pj { padding-left: 1px; background: linear-gradient(#000, #000) right 8px top 9px / 1px 1px no-repeat, linear-gradient(#000, #000) right 7px top 8px / 3px 1px no-repeat, linear-gradient(#000, #000) right 6px top 7px / 5px 1px no-repeat, linear-gradient(#c0c0c0, #c0c0c0) right 1px top 1px / 15px 16px no-repeat, linear-gradient(#000, #000) right 0 top 0 / 17px 18px no-repeat, #fff; }
.top .btn { width: 50px; height: 26px; }
.top .btn.q { width: 25px; }
.project .tabs { margin: 4px 0 0 8px; }
.tab.first { width: 71px; }
.tab.wide { width: 119px; }
.page { margin: -1px 0 0 8px; }
.project .page { padding: 3px 9px 6px 3px; margin-right: 1px; }
.project fieldset { box-shadow: 1px 1px 0 #fff; clip-path: inset(0 -2px -2px 0); }
.project .row { padding-left: 4px; }
.project fieldset .row + .row { margin-top: 6px; }
.project .row > input[type="radio"], .project .row > input[type="checkbox"] { margin-right: 5px; }
.amount { width: 35px; }
.unit { width: 40px; margin: 0 4px 0 8px; padding-left: 3px; color: #868686; background: linear-gradient(#808080, #808080) right 7px top 10px / 3px 1px no-repeat, linear-gradient(#808080, #808080) right 5px top 8px / 7px 2px no-repeat, linear-gradient(#fff, #fff) right 16px top 1px / 1px 16px no-repeat, #c0c0c0; opacity: 1; }
.brk { width: 184px; margin-top: 2px; }
.box { margin-top: 3px; padding: 3px 0 1px 3px; border: 1px solid #808080; box-shadow: inset 1px 1px 0 #fff, 1px 1px 0 #fff; }
.box .row { height: 19px; margin-bottom: 3px; padding: 0; }
.box .row label, .box .lab { width: 60px; flex: none; padding-left: 1px; }
.sttime { width: 130px; padding-left: 1px; }
.prog { width: 150px; margin-right: 15px; background: repeating-linear-gradient(90deg, #000080 0 10px, #c0c0c0 10px 12px) 2px 1px / 146px 15px no-repeat #c0c0c0; box-shadow: none; }
output.sunk { width: 56px; padding-left: 2px; height: 18px; }
.acts { display: flex; gap: 5px; padding-left: 60px; }
.acts > div { width: 60px; display: flex; flex-direction: column; align-items: center; white-space: nowrap; }
.acts .btn { width: 60px; height: 28px; }
.acts label { height: 16px; }
.acts .rs { width: 40px; margin-left: 15px; }
.acts .rs .btn { width: 40px; }

/* library window */
.library { top: 306px; bottom: -2px; border-top: 1px solid #000; padding-top: 3px; }
.library .title { height: 18px; border-top: 1px solid #fff; }
.library .tabs { margin: 2px 0 0 9px; }
.library .page { padding: 4px 7px 3px 10px; margin-left: 2px; height: 274px; }
.tree { display: flex; height: 114px; border: 2px solid #000; border-right: 1px solid #fff; border-bottom: 1px solid #fff; background: #fff; overflow: hidden; }
.tree ul { flex: 1; padding: 0 0 0 12px; background: repeating-linear-gradient(#808080 0 1px, #fff 1px 2px) 11px 8px / 1px 100% no-repeat; }
.tree li { display: flex; align-items: center; height: 16px; gap: 5px; background: repeating-linear-gradient(90deg, #808080 0 1px, #fff 1px 2px) 1px 8px / 9px 1px no-repeat; padding-left: 10px; }
.tree svg { width: 16px; height: 16px; }
.tree .thumb { height: 47px; }
.library fieldset { margin-top: 2px; padding: 4px 3px 3px; box-shadow: 1px 1px 0 #fff; clip-path: inset(0 -2px -2px 0); height: 150px; }
.library legend { margin-left: 3px; }
.tbl { height: 127px; border: 2px solid #000; border-top-color: #404040; background: #808080; }
table { border-collapse: collapse; width: 100%; table-layout: fixed; background: #fff; }
th, td { border-bottom: 1px solid #808080; border-right: 1px solid #808080; padding: 0 2px; font-weight: normal; text-align: left; height: 19px; vertical-align: middle; }
th { height: 15px; background: #c0c0c0; text-align: center; }
th:first-child { width: 80px; }
.cur { background: #000080; color: #fff; }
.tall td { height: 48px; vertical-align: top; }
.foot { display: flex; margin: 9px 0 0 18px; }
.foot .btn { width: 96px; height: 26px; }
.foot .set { width: 80px; margin-left: 34px; }
.foot .rel { width: 80px; margin-left: 9px; }
.foot .q { width: 27px; margin-left: 8px; }

/* monitor windows */
.mon1, .mon2 { border: 1px solid #c0c0c0; box-shadow: inset 1px 1px 0 #fff; padding: 2px 3px; bottom: 0; }
.mon1 { left: 362px; top: 318px; width: 360px; border-right-color: #000; }
.mon2 { left: 727px; top: 273px; width: 358px; }
.row input[type="checkbox"] { margin-right: 5px; }
.yset { margin: 5px 0 0 6px; }
.yset label, .ymin label:first-of-type { margin-left: 4px; }
.now { text-align: right; padding-right: 22px; height: 16px; }
.chartrow { display: flex; flex: none; }
.chart { flex: none; overflow: visible; }
.chart text { font: 10px "Liberation Sans", sans-serif; }
.chartrow .scroll { width: 13px; }
.chartrow .scroll button { width: 13px; height: 15px; }
.chartrow .scroll button::before { border-left-width: 3px; border-right-width: 3px; }
.chartrow .up::before { border-bottom-width: 3px !important; }
.chartrow .dn::before { border-top-width: 3px !important; }
.chartrow .thumb, .hrow .thumb { flex: 1; }
.mon1 .chartrow { padding-left: 10px; gap: 1px; height: 152px; }
.mon1 .chartrow .scroll { margin: 4px 0 12px; }
.timerow { display: flex; height: 54px; padding: 1px 0 0 10px; }
.mon1 .vs { margin-left: 6px; }
.time { flex: 1; padding: 11px 24px 0 29px; }
.time label { display: block; text-align: center; padding-right: 12px; }
.time input { width: 100%; margin-top: 4px; }
.ticks { display: flex; justify-content: space-between; padding: 1px 3px; }
.ticks i { width: 1px; height: 3px; background: #000; }
.dates { display: flex; padding: 1px 3px 0 9px; height: 16px; white-space: nowrap; }
.dates .pct { width: 46px; }
.dates .end { margin-left: auto; }
.mon1 .ymin { margin-left: 6px; }
.btns { display: flex; margin: 2px 0 0 15px; }
.mon1 .shut { margin-left: 111px; }
.btns .q { margin-left: 11px; }
.mon2 .title { height: 18px; }
.mon2 .yset { margin-top: 9px; margin-left: 5px; }
.mon2 .chartrow { margin-top: 6px; padding-left: 9px; gap: 2px; }
.mon2 .chartrow .scroll { margin: 5px 0 4px; }
.axisrow { display: flex; height: 64px; padding: 3px 0 0 6px; }
.axisrow .vt { margin: 7px 0 0 5px; }
.xl { display: flex; justify-content: space-between; width: 254px; margin-left: 49px; font-size: 11px; }
.xl span { writing-mode: vertical-rl; line-height: 14px; white-space: nowrap; }
.hrow { display: flex; height: 22px; padding-left: 3px; }
.hrow .scroll { width: 274px; height: 13px; margin: 9px 0 0 26px; }
.hrow .scroll button { height: 13px; }
.hrow .left::before, .hrow .right::before { border-top-width: 3px; border-bottom-width: 3px; }
.hrow .pct { width: 31px; }
.mon2 .ymin { margin: 15px 0 0 5px; }
.mon2 .ymin label:first-of-type { margin-left: 2px; }
.ymin .vis { margin-left: 14px; }
.ymin input[type="range"] { width: 58px; margin: 0 4px 0 9px; }
.cell { display: flex; padding: 5px 0 0 13px; height: 39px; }
.cell label { width: 78px; }
.cs { width: 184px; padding-top: 3px; }
.cs input { width: 100%; }
.nums { display: flex; justify-content: space-between; font-size: 10px; line-height: 12px; padding: 1px 6px 0 4px; }
.cell .spin { margin: 1px 0 0 13px; }
.mon2 .btns { margin-top: 2px; }
.mon2 .shut { margin-left: 111px; }
```
